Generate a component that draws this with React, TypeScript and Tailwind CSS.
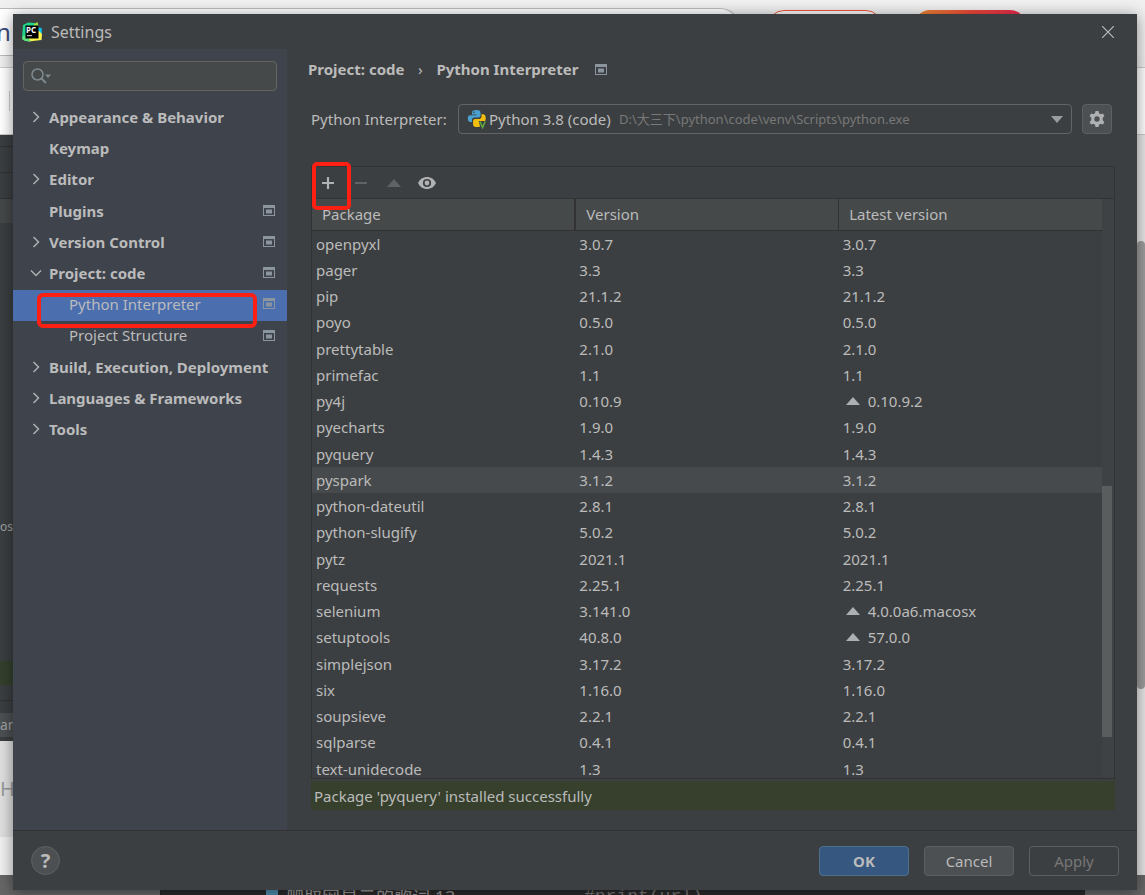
import type { ReactNode } from 'react'
import clsx from 'clsx'

type TreeItem = {
  label: string
  state?: 'open' | 'closed'
  child?: boolean
  scoped?: boolean
  selected?: boolean
}

type PackageRow = {
  name: string
  version: string
  latest: string
  outdated?: boolean
  hovered?: boolean
}

const treeItems: TreeItem[] = [
  { label: 'Appearance & Behavior', state: 'closed' },
  { label: 'Keymap' },
  { label: 'Editor', state: 'closed' },
  { label: 'Plugins', scoped: true },
  { label: 'Version Control', state: 'closed', scoped: true },
  { label: 'Project: code', state: 'open', scoped: true },
  { label: 'Python Interpreter', child: true, scoped: true, selected: true },
  { label: 'Project Structure', child: true, scoped: true },
  { label: 'Build, Execution, Deployment', state: 'closed' },
  { label: 'Languages & Frameworks', state: 'closed' },
  { label: 'Tools', state: 'closed' },
]

const packages: PackageRow[] = [
  { name: 'openpyxl', version: '3.0.7', latest: '3.0.7' },
  { name: 'pager', version: '3.3', latest: '3.3' },
  { name: 'pip', version: '21.1.2', latest: '21.1.2' },
  { name: 'poyo', version: '0.5.0', latest: '0.5.0' },
  { name: 'prettytable', version: '2.1.0', latest: '2.1.0' },
  { name: 'primefac', version: '1.1', latest: '1.1' },
  { name: 'py4j', version: '0.10.9', latest: '0.10.9.2', outdated: true },
  { name: 'pyecharts', version: '1.9.0', latest: '1.9.0' },
  { name: 'pyquery', version: '1.4.3', latest: '1.4.3' },
  { name: 'pyspark', version: '3.1.2', latest: '3.1.2', hovered: true },
  { name: 'python-dateutil', version: '2.8.1', latest: '2.8.1' },
  { name: 'python-slugify', version: '5.0.2', latest: '5.0.2' },
  { name: 'pytz', version: '2021.1', latest: '2021.1' },
  { name: 'requests', version: '2.25.1', latest: '2.25.1' },
  { name: 'selenium', version: '3.141.0', latest: '4.0.0a6.macosx', outdated: true },
  { name: 'setuptools', version: '40.8.0', latest: '57.0.0', outdated: true },
  { name: 'simplejson', version: '3.17.2', latest: '3.17.2' },
  { name: 'six', version: '1.16.0', latest: '1.16.0' },
  { name: 'soupsieve', version: '2.2.1', latest: '2.2.1' },
  { name: 'sqlparse', version: '0.4.1', latest: '0.4.1' },
  { name: 'text-unidecode', version: '1.3', latest: '1.3' },
]

function PyCharmLogo() {
  return (
    <svg width="20" height="20" viewBox="0 0 20 20" aria-hidden="true">
      <path d="M1 3 L6 0.5 L13 1 L12 10 L4 19 L0 17 Z" fill="#21d789" />
      <path d="M12 2 L15.5 0 L16.5 4 L12 5 Z" fill="#9be04a" />
      <path d="M15 5 L19.5 6 L20 11 L14 13 Z" fill="#07c3f2" />
      <path d="M3 14 L17 9 L20 12 L19.5 18 L6 19.5 Z" fill="#fcf84a" />
      <path d="M1 14 L5 14 L9 19.5 L3 19 L0 17 Z" fill="#5fe080" />
      <rect x="3.5" y="3.5" width="13" height="13" fill="#000" />
      <text x="4" y="11" fontSize="8" fontWeight="700" fill="#fff" fontFamily="Noto Sans, sans-serif">
        PC
      </text>
      <rect x="5" y="13" width="5" height="1.2" fill="#bbb" />
    </svg>
  )
}

function PythonLogo() {
  return (
    <svg width="20" height="20" viewBox="0 0 20 20" className="shrink-0" aria-hidden="true">
      <path
        d="M9 1C6 1 5 2 5 3.6V5.4h4.6v.8H3.3C1.2 6.200 .8 8 .8 9.600c0 1.800 .6 3.500 2.500 3.500H5v-2.200c0-1.400 1-2.300 2.400-2.300h4c1.200 0 2.100-.8 2.100-2V3.600C13.500 1.800 12 1 9 1z"
        fill="#4aa0cf"
      />
      <circle cx="7" cy="3.200" r=".8" fill="#3c3f41" />
      <path
        d="M14.500 5.200v2.300c0 1.500-1 2.400-2.400 2.400H8.300c-1.300 0-2.200.9-2.200 2v3.500c0 1.700 1.500 2.700 4.200 2.700 1.200 0 2.100-.2 2.700-.6L11.800 12h6.400c.4-.8.5-1.700.5-2.800 0-2.500-.9-4-2.700-4z"
        fill="#f2bf0e"
      />
      <path d="M13 12.500l2.600 6 2.600-6" fill="none" stroke="#5fad3f" strokeWidth="1.500" />
    </svg>
  )
}

function ScopeIcon({ className }: { className?: string }) {
  return (
    <svg width="12" height="11" viewBox="0 0 12 11" className={className} aria-hidden="true">
      <path d="M0 0H12V11H0Z M1 3V10H11V3Z" fill="#8b959e" fillRule="evenodd" />
      <rect x="3" y="4.500" width="6" height="4" fill="#8b959e" />
    </svg>
  )
}

function Chevron({ open }: { open: boolean }) {
  return (
    <svg width="12" height="12" viewBox="0 0 12 12" className="shrink-0" aria-hidden="true">
      <path
        d={open ? 'M1 3.500L6 8.500L11 3.500' : 'M3.500 1L8.500 6L3.500 11'}
        fill="none"
        stroke="#adb0b2"
        strokeWidth="1.500"
      />
    </svg>
  )
}

function UpTriangle({ color }: { color: string }) {
  return (
    <svg width="14" height="8" viewBox="0 0 14 8" className="shrink-0" aria-hidden="true">
      <path d="M0 8L7 0L14 8Z" fill={color} />
    </svg>
  )
}

function ToolButton({
  label,
  disabled,
  children,
}: {
  label: string
  disabled?: boolean
  children: ReactNode
}) {
  return (
    <button
      type="button"
      aria-label={label}
      disabled={disabled}
      className="relative flex h-[30px] w-8 items-center justify-center"
    >
      {children}
    </button>
  )
}

function Desktop() {
  return (
    <div className="absolute inset-0 flex flex-col bg-white">
      <div className="h-2 shrink-0 bg-[#f0f0f0]" />
      <div className="flex h-12 shrink-0 items-start justify-between bg-[#f0f0f0]">
        <div className="flex h-full w-[740px] items-center overflow-hidden rounded-r-[20px] border-y border-r border-[#bbb] bg-white">
          <span className="-ml-1 text-2xl text-[#3b4a7a]">n</span>
        </div>
        <div className="mr-[119px] flex gap-8">
          <div className="mt-[2px] h-8 w-[114px] rounded-2xl border border-[#f0533a] bg-[#fafafa]" />
          <div className="mt-[2px] h-8 w-[112px] rounded-2xl bg-linear-to-r from-[#ee8a35] via-[#f04a38] to-[#e8234f]" />
        </div>
      </div>
      <div className="h-3 shrink-0 border-b border-[#ccc] bg-[#eee]" />
      <div className="flex h-[67px] shrink-0 items-center border-b border-[#ccc]">
        <div className="ml-[9px] h-5 w-px bg-[#ccc]" />
      </div>
      <div className="flex min-h-0 flex-1 justify-between">
        <div className="flex w-40 flex-col bg-[#3b3e40] text-[#a0a0a0]">
          <div className="h-3 border-b border-[#2f3133]" />
          <div className="h-[26px] border-b border-[#2f3133]" />
          <div className="h-[26px] border-b border-[#2f3133]" />
          <div className="h-6 bg-[#454849]" />
          <div className="flex flex-1 items-end pb-[126px]">
            <span className="text-xs leading-4">os</span>
          </div>
          <div className="h-6 bg-[#34402d]" />
          <div className="h-4 border-b border-[#2f3133]" />
          <div className="mt-3 h-6 overflow-hidden bg-[#4c5052] text-sm leading-6">am</div>
          <div className="mt-1 h-24 overflow-hidden bg-[#dfdfdf] text-xl leading-24 text-[#999]">HM</div>
          <div className="h-[38px] bg-[#f0f0f0]" />
        </div>
        <div className="w-2 bg-[#e6e6e6] pt-[106px]">
          <div className="h-[448px] rounded-md bg-[#9c9c9c]" />
        </div>
      </div>
      <div className="flex h-5 shrink-0 items-end bg-[#666] text-lg leading-4 text-[#999]">
        <div className="h-full w-40" />
        <div className="flex h-full flex-1 items-end overflow-hidden border-l border-[#222] bg-[#2b2b2b]">
          <div className="ml-[105px] size-3 shrink-0 bg-[#4f8fb0]" />
          <div className="ml-2 h-[6px] w-[200px] overflow-hidden whitespace-nowrap">爬取网易云的歌词 13</div>
          <div className="ml-[98px] h-[6px] overflow-hidden font-['Liberation_Mono',monospace] text-[#777]">
            #print(url)
          </div>
        </div>
        <div className="h-full w-[60px]" />
      </div>
    </div>
  )
}

function Sidebar() {
  return (
    <aside className="flex w-[274px] shrink-0 flex-col bg-[#3e434c] pt-3">
      <label className="mx-[10px] flex h-[30px] items-center rounded-sm border border-[#646464] bg-[#45494a] pl-[7px]">
        <svg width="20" height="16" viewBox="0 0 20 16" className="shrink-0" aria-hidden="true">
          <circle cx="6.500" cy="6.500" r="5.500" fill="none" stroke="#7f8b91" strokeWidth="1.500" />
          <path d="M10.500 10.500L15 15" stroke="#7f8b91" strokeWidth="1.800" />
          <path d="M14 6.500H20L17 10Z" fill="#7f8b91" />
        </svg>
        <input type="text" aria-label="Search settings" className="min-w-0 flex-1 bg-transparent px-1 outline-none" />
      </label>
      <ul className="mt-3">
        {treeItems.map((item) => (
          <li key={item.label} className="h-[31px] nth-[5n+3]:h-8">
            <button
              type="button"
              className={clsx(
                'relative flex h-full w-full items-center pr-3 pb-1 text-left',
                item.child ? 'pl-14' : 'pl-[17px] font-bold',
                item.selected && 'bg-[#4b6eaf]'
              )}
            >
              {item.state ? (
                <Chevron open={item.state === 'open'} />
              ) : item.child ? null : (
                <span className="w-3" />
              )}
              <span className={clsx('flex-1 whitespace-nowrap', !item.child && 'pl-[7px]')}>{item.label}</span>
              {item.scoped && <ScopeIcon />}
              {item.selected && (
                <span className="absolute top-[3px] right-[30px] left-6 h-[35px] rounded-md border-4 border-[#ff2014]" />
              )}
            </button>
          </li>
        ))}
      </ul>
    </aside>
  )
}

function PackageTable() {
  return (
    <div className="flex min-h-0 flex-1 border-t border-[#323232]">
      <div className="min-w-0 flex-1 overflow-hidden">
        <table className="w-full table-fixed border-collapse text-left">
          <thead>
            <tr className="h-[31px] border-b border-[#323232] bg-[#45494a]">
              <th className="border-r-2 border-[#323232] pl-[10px] font-normal">Package</th>
              <th className="border-r border-[#323232] pl-[10px] font-normal">Version</th>
              <th className="pl-[10px] font-normal">Latest version</th>
            </tr>
          </thead>
          <tbody>
            {packages.map((row) => (
              <tr key={row.name} className={clsx('h-[26px] nth-[4n+1]:h-[27px]', row.hovered && 'bg-[#464a4c]')}>
                <td className="pl-1">{row.name}</td>
                <td className="pl-1">{row.version}</td>
                <td className="pl-1">
                  <span className="flex items-center gap-2">
                    {row.outdated && (
                      <span className="pl-[3px]">
                        <UpTriangle color="#adb0b2" />
                      </span>
                    )}
                    {row.latest}
                  </span>
                </td>
              </tr>
            ))}
          </tbody>
        </table>
      </div>
      <div className="flex w-3 flex-col justify-end bg-[#3f4244] pr-[2px] pb-[41px]">
        <div className="h-[251px] bg-[#595d5e]" />
      </div>
    </div>
  )
}

function InterpreterPage() {
  return (
    <main className="flex min-w-0 flex-1 flex-col pr-[22px] pb-5 pl-6">
      <nav aria-label="Breadcrumb" className="-ml-[3px] flex h-10 items-center font-bold">
        <a href="#project">Project: code</a>
        <span className="w-8 text-center font-normal">›</span>
        <span>Python Interpreter</span>
        <ScopeIcon className="ml-[17px]" />
      </nav>

      <div className="mt-[15px] flex h-[30px] items-center">
        <label htmlFor="interpreter" className="w-[147px] shrink-0 whitespace-nowrap">
          Python Interpreter:
        </label>
        <div className="flex h-[30px] min-w-0 flex-1 items-center rounded-sm border border-[#646464] pr-2 pl-2">
          <PythonLogo />
          <select id="interpreter" className="ml-[2px] shrink-0 appearance-none bg-transparent outline-none">
            <option>Python 3.8 (code)</option>
          </select>
          <span className="ml-2 flex-1 truncate text-[13px] text-[#787878]">
            D:\大三下\python\code\venv\Scripts\python.exe
          </span>
          <svg width="12" height="7" viewBox="0 0 12 7" className="shrink-0" aria-hidden="true">
            <path d="M0 0H12L6 7Z" fill="#9a9da0" />
          </svg>
        </div>
        <button
          type="button"
          aria-label="Interpreter options"
          className="mr-[3px] ml-[10px] flex size-[30px] items-center justify-center rounded-sm border border-[#5e6060] bg-[#4c5052]"
        >
          <svg width="16" height="16" viewBox="0 0 16 16" aria-hidden="true">
            <path
              d="M6.500 0H9.500L10 2.300L11.600 3.200L13.900 2.500L15.400 5.100L13.700 6.800V9.200L15.400 10.900L13.900 13.500L11.600 12.800L10 13.700L9.500 16H6.500L6 13.700L4.400 12.800L2.100 13.500L.6 10.900L2.300 9.200V6.800L.6 5.100L2.100 2.500L4.400 3.200L6 2.300Z M8 5.300A2.700 2.700 0 1 0 8 10.700A2.700 2.700 0 1 0 8 5.300Z"
              fill="#afb1b3"
              fillRule="evenodd"
            />
          </svg>
        </button>
      </div>

      <section className="mt-8 flex min-h-0 flex-1 flex-col border border-[#323232]">
        <div className="flex h-[31px] shrink-0 items-center gap-px">
          <ToolButton label="Install">
            <svg width="14" height="14" viewBox="0 0 14 14" aria-hidden="true">
              <path d="M7 1V13M1 7H13" stroke="#afb1b3" strokeWidth="2.200" />
            </svg>
            <span className="absolute -top-[6px] -right-[7px] left-0 h-12 rounded-[5px] border-4 border-[#ff2014]" />
          </ToolButton>
          <ToolButton label="Uninstall" disabled>
            <svg width="12" height="2" viewBox="0 0 12 2" aria-hidden="true">
              <path d="M0 1H12" stroke="#606263" strokeWidth="2" />
            </svg>
          </ToolButton>
          <ToolButton label="Upgrade" disabled>
            <UpTriangle color="#606263" />
          </ToolButton>
          <ToolButton label="Show early releases">
            <svg width="18" height="12" viewBox="0 0 18 12" aria-hidden="true">
              <path
                d="M9 0C5 0 1.700 2.300 0 6C1.700 9.700 5 12 9 12S16.300 9.700 18 6C16.300 2.300 13 0 9 0ZM9 1.900A4.100 4.100 0 1 1 9 10.100A4.100 4.100 0 1 1 9 1.900Z"
                fill="#afb1b3"
                fillRule="evenodd"
              />
              <circle cx="9" cy="6" r="2.400" fill="#afb1b3" />
            </svg>
          </ToolButton>
        </div>
        <PackageTable />
      </section>

      <p className="mt-[2px] h-[29px] shrink-0 bg-[#36402d] pl-[3px] leading-[30px]">
        Package 'pyquery' installed successfully
      </p>
    </main>
  )
}

export default function App() {
  return (
    <div className="relative h-screen overflow-hidden pt-[14px] pr-2 pb-[5px] pl-[13px] font-['Noto_Sans','Noto_Sans_CJK_SC',sans-serif] text-[15px] leading-5">
      <Desktop />
      <div
        role="dialog"
        aria-label="Settings"
        className="relative flex h-full flex-col bg-[#3c3f41] text-[#bbb] shadow-[0_2px_14px_rgba(0,0,0,0.45)]"
      >
        <header className="flex h-[35px] shrink-0 items-center pl-[9px]">
          <PyCharmLogo />
          <h1 className="ml-[9px] flex-1 text-base">Settings</h1>
          <button type="button" aria-label="Close" className="mr-[21px] flex size-4 items-center justify-center">
            <svg width="12" height="12" viewBox="0 0 12 12" aria-hidden="true">
              <path d="M0 0L12 12M12 0L0 12" stroke="#bbb" strokeWidth="1.200" />
            </svg>
          </button>
        </header>

        <div className="flex min-h-0 flex-1">
          <Sidebar />
          <InterpreterPage />
        </div>

        <footer className="flex h-[60px] shrink-0 items-center gap-[15px] border-t border-[#323232] px-[18px]">
          <button
            type="button"
            aria-label="Help"
            className="mr-auto flex size-[29px] items-center justify-center rounded-full border border-[#5e6060] bg-[#4c5052] text-xl font-bold"
          >
            ?
          </button>
          <button
            type="button"
            className="h-[30px] w-[90px] rounded-sm border border-[#4c708c] bg-[#365880] font-bold"
          >
            OK
          </button>
          <button type="button" className="h-[30px] w-[90px] rounded-sm border border-[#5e6060] bg-[#4c5052]">
            Cancel
          </button>
          <button
            type="button"
            disabled
            className="h-[30px] w-[90px] rounded-sm border border-[#5e6060] text-[#777]"
          >
            Apply
          </button>
        </footer>
      </div>
    </div>
  )
}
